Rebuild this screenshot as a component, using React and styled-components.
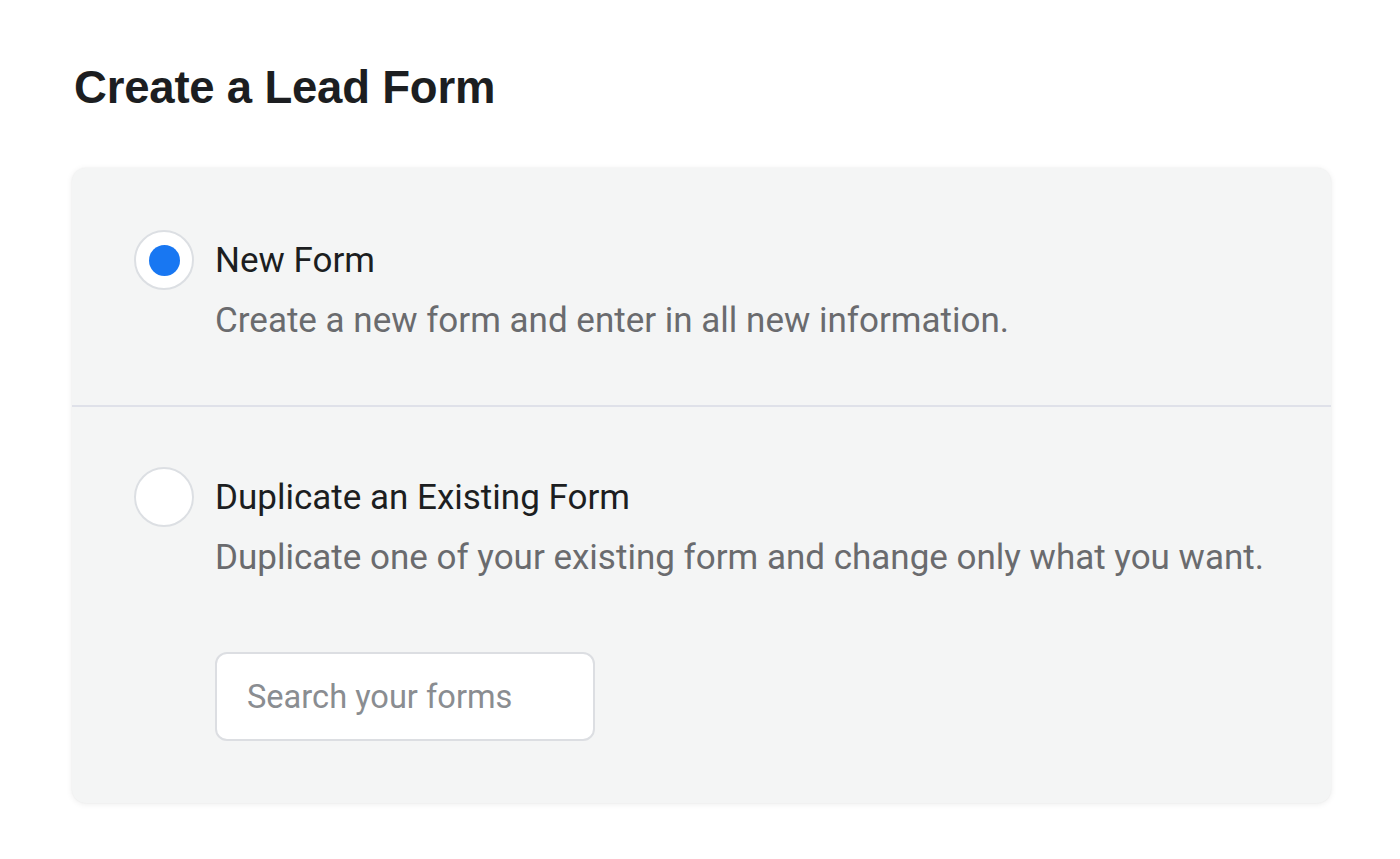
import React from 'react'
import styled, { createGlobalStyle } from 'styled-components'

const GlobalStyle = createGlobalStyle`
    * { box-sizing: border-box; }
    body {
        margin: 0;
        background: #fff;
        font-family: Roboto, "Liberation Sans", Arial, sans-serif;
    }
`

const Page = styled.div`
    padding: 62px 69px 56px 72px;
`

const Title = styled.h1`
    margin: 0 0 54px 2px;
    font-family: "Liberation Sans", Arial, sans-serif;
    font-weight: 700;
    font-size: 45.5px;
    line-height: 52px;
    color: #1c1e21;
    letter-spacing: -0.2px;
`

const Card = styled.div`
    width: 1259px;
    background: #f4f5f5;
    border-radius: 14px;
    box-shadow: 0 1px 6px rgba(0, 0, 0, 0.08), 0 0 2px rgba(0, 0, 0, 0.05);
    overflow: hidden;
`

const Section = styled.div`
    padding: ${p => p.$top || 62}px 62px ${p => p.$bottom || 62}px;
    border-top: ${p => (p.$divided ? '2px solid #dfe1e9' : 'none')};
`

const Option = styled.label`
    display: flex;
    align-items: flex-start;
    gap: 21px;
    cursor: pointer;
`

const Radio = styled.span`
    flex: none;
    width: 60px;
    height: 60px;
    border-radius: 50%;
    background: #fff;
    border: 2px solid #dcdfe3;
    display: flex;
    align-items: center;
    justify-content: center;

    &::after {
        content: '';
        display: ${p => (p.$checked ? 'block' : 'none')};
        width: 31px;
        height: 31px;
        border-radius: 50%;
        background: #1877f2;
    }
`

const Texts = styled.div`
    display: flex;
    flex-direction: column;
    padding-top: 11px;
`

const Label = styled.span`
    font-size: 35px;
    line-height: 40px;
    color: #1c1e21;
`

const Desc = styled.span`
    margin-top: 20px;
    font-size: 35px;
    line-height: 40px;
    color: #6a6b6e;
`

const SearchInput = styled.input`
    display: block;
    margin: 74px 0 0 81px;
    width: 380px;
    height: 89px;
    padding: 0 30px;
    border: 2px solid #dcdee2;
    border-radius: 12px;
    background: #fff;
    font-family: Roboto, "Liberation Sans", Arial, sans-serif;
    font-size: 32.6px;
    color: #1c1e21;
    outline: none;

    &::placeholder {
        color: #8a8d91;
    }
`

const App = () => {
    return (
        <Page>
            <GlobalStyle />
            <Title>Create a Lead Form</Title>
            <Card>
                <Section $bottom={64}>
                    <Option>
                        <Radio $checked />
                        <Texts>
                            <Label>New Form</Label>
                            <Desc>Create a new form and enter in all new information.</Desc>
                        </Texts>
                    </Option>
                </Section>
                <Section $divided $top={60}>
                    <Option>
                        <Radio />
                        <Texts>
                            <Label>Duplicate an Existing Form</Label>
                            <Desc>Duplicate one of your existing form and change only what you want.</Desc>
                        </Texts>
                    </Option>
                    <SearchInput placeholder="Search your forms" />
                </Section>
            </Card>
        </Page>
    )
}

export default App
